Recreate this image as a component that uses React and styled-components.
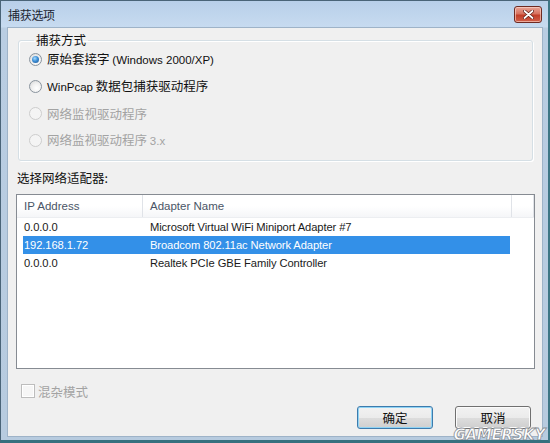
import React from "react";
import styled, { createGlobalStyle } from "styled-components";

const GlobalStyle = createGlobalStyle`
  html, body { margin: 0; padding: 0; background: #ffffff; }
  body {
    width: 550px; height: 443px; overflow: hidden;
    font-family: "Liberation Sans", "Noto Sans CJK SC", sans-serif;
  }
  * { box-sizing: border-box; }
`;

const Window = styled.div`
  position: relative;
  width: 550px;
  height: 443px;
  display: flex;
  flex-direction: column;
  border: 1px solid #4a6478;
  border-right: 2px solid #3d7685;
  border-bottom: 3px solid #36707e;
  background: linear-gradient(to bottom, #b8cfe9 0px, #c7dbf0 26px, #b9cde2 27px, #b7cbdf 100%);
  overflow: hidden;
`;

const TitleBar = styled.div`
  height: 26px;
  flex: none;
  display: flex;
  align-items: center;
  justify-content: space-between;
  padding: 0 6px 0 7px;
`;

const Title = styled.span`
  font-family: "Noto Sans CJK SC", sans-serif;
  font-size: 12px;
  color: #1b2430;
  letter-spacing: -0.3px;
`;

const CloseButton = styled.div`
  width: 28px;
  height: 17px;
  margin-top: 1px;
  border: 1px solid #6e2a22;
  border-radius: 3px;
  background: linear-gradient(to bottom, #e8a497 0%, #d7725f 45%, #c23e28 55%, #d0604a 100%);
  box-shadow: inset 0 0 0 1px rgba(255, 220, 210, 0.6);
  display: flex;
  align-items: center;
  justify-content: center;
`;

const Client = styled.div`
  flex: 1;
  margin: 0 5px 3px 6px;
  background: #f0f0f0;
  border: 1px solid #9eb3c8;
  display: flex;
  flex-direction: column;
  padding: 5px 9px 6px 9px;
`;

const Group = styled.fieldset`
  margin: 0 0 0 1px;
  padding: 0 0 6px 10px;
  border: 1px solid #d5dfe5;
  border-radius: 3px;
  box-shadow: inset 1px 1px 0 #ffffff, 1px 1px 0 #ffffff;
  display: flex;
  flex-direction: column;
`;

const Legend = styled.legend`
  margin-left: 5px;
  padding: 0 2px;
  font-family: "Noto Sans CJK SC", sans-serif;
  font-size: 12.5px;
  line-height: 14px;
  color: #111111;
`;

const OptionRow = styled.div`
  height: 27px;
  margin-top: ${(p) => (p.$first ? "-1px" : "0")};
  display: flex;
  align-items: center;
  gap: 5px;
  color: ${(p) => (p.$disabled ? "#a3a3a3" : "#111111")};
`;

const Radio = styled.span`
  position: relative;
  width: 13px;
  height: 13px;
  border-radius: 50%;
  flex: none;
  border: 1px solid ${(p) => (p.$disabled ? "#cdcdcd" : "#8a949e")};
  background: ${(p) =>
    p.$disabled
      ? "#f4f4f4"
      : "radial-gradient(circle at 60% 65%, #ffffff 0%, #f1f1f1 45%, #d3d3d3 100%)"};
  &::after {
    content: "";
    display: ${(p) => (p.$checked ? "block" : "none")};
    position: absolute;
    left: 2px;
    top: 2px;
    width: 7px;
    height: 7px;
    border-radius: 50%;
    background: radial-gradient(circle at 40% 35%, #a8dcff 0%, #3d8fd6 45%, #1b4f8c 100%);
  }
`;

const OptionText = styled.span`
  font-family: "Noto Sans CJK SC", sans-serif;
  font-size: 12.5px;
  line-height: 14px;
  white-space: pre;
`;

const Latin = styled.span`
  font-family: "Liberation Sans", sans-serif;
  font-size: 11.5px;
`;

const SectionLabel = styled.div`
  margin-top: 10px;
  font-family: "Noto Sans CJK SC", sans-serif;
  font-size: 12.5px;
  line-height: 14px;
  color: #111111;
`;

const ListBox = styled.div`
  margin-top: 9px;
  margin-left: -1px;
  margin-right: -2px;
  height: 175px;
  background: #ffffff;
  border: 1px solid #868b92;
  display: flex;
  flex-direction: column;
`;

const HeaderRow = styled.div`
  height: 23px;
  display: grid;
  grid-template-columns: 126px 369px 1fr;
  background: linear-gradient(to bottom, #ffffff 0%, #ffffff 50%, #f5f6f8 100%);
  border-bottom: 1px solid #eceef1;
`;

const HeaderCell = styled.div`
  display: flex;
  align-items: center;
  padding-left: 7px;
  font-size: 11.5px;
  color: #4a5566;
  border-right: 1px solid #e0e3e8;
`;

const DataRow = styled.div`
  height: 18px;
  margin: 0 24px 0 6px;
  display: grid;
  grid-template-columns: 120px 1fr;
  background: ${(p) => (p.$selected ? "#3390e8" : "transparent")};
  color: ${(p) => (p.$selected ? "#ffffff" : "#1a1a1a")};
`;

const DataCell = styled.div`
  display: flex;
  align-items: center;
  padding-left: ${(p) => (p.$first ? "1px" : "7px")};
  font-size: 11.2px;
  letter-spacing: -0.1px;
  white-space: nowrap;
`;

const CheckRow = styled.div`
  margin-top: 14px;
  margin-left: 4px;
  display: flex;
  align-items: center;
  gap: 3px;
  height: 16px;
`;

const CheckBox = styled.span`
  width: 14px;
  height: 14px;
  border: 1px solid #bdbdbd;
  background: #f6f6f6;
  box-shadow: inset 0 0 0 1px #ffffff;
`;

const CheckText = styled.span`
  font-family: "Noto Sans CJK SC", sans-serif;
  font-size: 12.5px;
  color: #a3a3a3;
`;

const ButtonRow = styled.div`
  margin-top: 7px;
  margin-right: 2px;
  display: flex;
  justify-content: flex-end;
  gap: 22px;
`;

const Button = styled.div`
  width: 76px;
  height: 23px;
  border-radius: 3px;
  border: 1px solid ${(p) => (p.$default ? "#3d7bad" : "#707070")};
  background: linear-gradient(to bottom, #f2f2f2 0%, #ebebeb 50%, #dddddd 51%, #cfcfcf 100%);
  box-shadow: inset 0 0 0 1px ${(p) => (p.$default ? "#8fd3f4" : "#fbfbfb")};
  display: flex;
  align-items: center;
  justify-content: center;
  font-family: "Noto Sans CJK SC", sans-serif;
  font-size: 12.5px;
  color: #111111;
`;

const Watermark = styled.div`
  position: absolute;
  right: 3px;
  bottom: -2px;
  font-family: "DejaVu Sans", sans-serif;
  font-weight: bold;
  font-style: italic;
  font-size: 15px;
  line-height: 14px;
  letter-spacing: -0.3px;
  color: #ffffff;
  -webkit-text-stroke: 0.8px #8a8f96;
`;

const options = [
  { label: "原始套接字 ", latin: "(Windows 2000/XP)", checked: true },
  { label: "", latin: "WinPcap", rest: " 数据包捕获驱动程序" },
  { label: "网络监视驱动程序", disabled: true },
  { label: "网络监视驱动程序 ", latin: "3.x", disabled: true },
];

const adapters = [
  { ip: "0.0.0.0", name: "Microsoft Virtual WiFi Miniport Adapter #7" },
  { ip: "192.168.1.72", name: "Broadcom 802.11ac Network Adapter", selected: true },
  { ip: "0.0.0.0", name: "Realtek PCIe GBE Family Controller" },
];

export default function App() {
  return (
    <>
      <GlobalStyle />
      <Window>
        <TitleBar>
          <Title>捕获选项</Title>
          <CloseButton>
            <svg width="11" height="9" viewBox="0 0 11 9">
              <path d="M1.5 1 L9.5 8 M9.5 1 L1.5 8" stroke="#5a1a12" strokeWidth="3.2" strokeLinecap="round" />
              <path d="M1.5 1 L9.5 8 M9.5 1 L1.5 8" stroke="#ffffff" strokeWidth="1.8" strokeLinecap="round" />
            </svg>
          </CloseButton>
        </TitleBar>
        <Client>
          <Group>
            <Legend>捕获方式</Legend>
            {options.map((o, i) => (
              <OptionRow key={i} $first={i === 0} $disabled={o.disabled}>
                <Radio $checked={o.checked} $disabled={o.disabled} />
                <OptionText>
                  {o.label}
                  {o.latin && <Latin>{o.latin}</Latin>}
                  {o.rest}
                </OptionText>
              </OptionRow>
            ))}
          </Group>
          <SectionLabel>选择网络适配器:</SectionLabel>
          <ListBox>
            <HeaderRow>
              <HeaderCell>IP Address</HeaderCell>
              <HeaderCell>Adapter Name</HeaderCell>
              <HeaderCell />
            </HeaderRow>
            {adapters.map((a, i) => (
              <DataRow key={i} $selected={a.selected}>
                <DataCell $first>{a.ip}</DataCell>
                <DataCell>{a.name}</DataCell>
              </DataRow>
            ))}
          </ListBox>
          <CheckRow>
            <CheckBox />
            <CheckText>混杂模式</CheckText>
          </CheckRow>
          <ButtonRow>
            <Button $default>确定</Button>
            <Button>取消</Button>
          </ButtonRow>
        </Client>
        <Watermark>GAMERSKY</Watermark>
      </Window>
    </>
  );
}
